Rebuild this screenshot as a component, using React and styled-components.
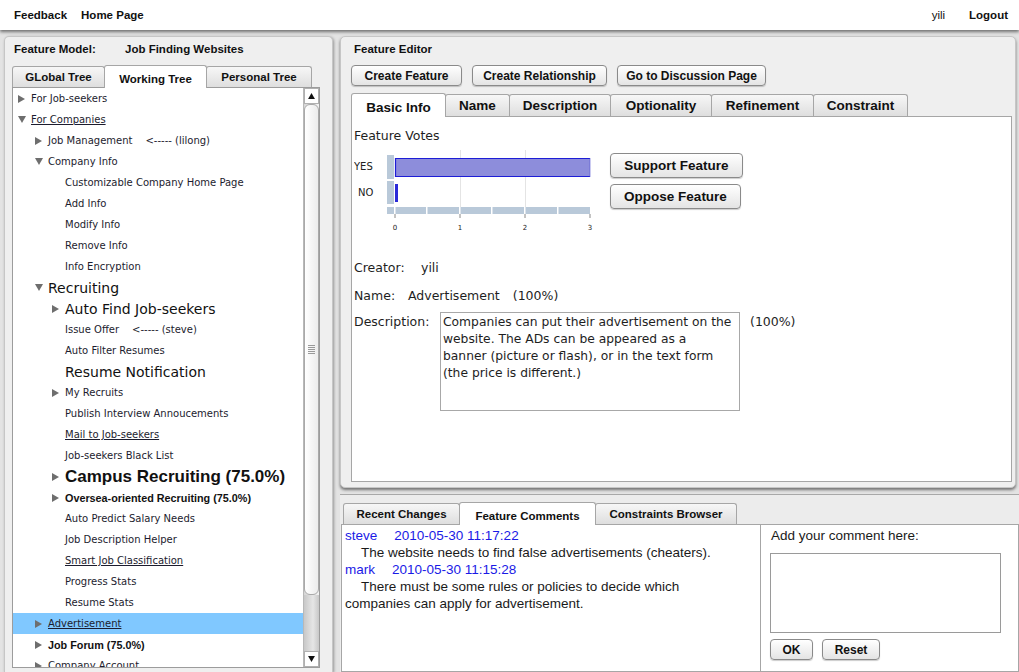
import React from "react";
import styled, { createGlobalStyle, css } from "styled-components";

const GlobalStyle = createGlobalStyle`
  html, body { margin: 0; padding: 0; }
  body {
    width: 1019px;
    height: 672px;
    overflow: hidden;
    background: #e3e3e3;
    font-family: "Liberation Sans", Arial, sans-serif;
    color: #1a1a1a;
  }
  #root { height: 672px; }
`;

const Page = styled.div`
  display: flex;
  flex-direction: column;
  height: 672px;
  overflow: hidden;
`;

const TopBar = styled.header`
  height: 30px;
  flex: none;
  display: flex;
  align-items: center;
  justify-content: space-between;
  padding: 0 11px 0 14px;
  background: #fff;
  box-shadow: 0 2px 3px rgba(0, 0, 0, 0.5);
  position: relative;
  z-index: 2;
`;

const NavGroup = styled.nav`
  display: flex;
  align-items: center;
  gap: ${(p) => p.$gap || 14}px;
`;

const NavLink = styled.span`
  font-size: 11.5px;
  font-weight: ${(p) => (p.$plain ? 400 : 700)};
  color: #111;
`;

const Main = styled.div`
  flex: 1;
  min-height: 0;
  display: flex;
  gap: 7px;
  padding: 6px 0 0 4px;
`;

const LeftPanel = styled.section`
  width: 329px;
  box-sizing: border-box;
  display: flex;
  flex-direction: column;
  background: #efefef;
  border: 1px solid #c6c6c6;
  border-bottom: none;
  border-radius: 5px 5px 0 0;
  padding: 0 12px 4px 7px;
  box-shadow: 1px 1px 3px rgba(0, 0, 0, 0.35);
`;

const PanelHeader = styled.div`
  height: 28px;
  flex: none;
  display: flex;
  align-items: flex-start;
  padding: 5px 0 0 ${(p) => p.$indent || 2}px;
  box-sizing: border-box;
  font-size: 11.5px;
  font-weight: 700;
  line-height: 14px;
  color: #111;
`;

const HeaderLabel = styled.span`
  width: ${(p) => p.$w || "auto"};
  flex: none;
`;

const TabRow = styled.div`
  display: flex;
  align-items: flex-end;
  flex: none;
  height: ${(p) => p.$h}px;
  margin-left: ${(p) => p.$ml || 0}px;
  position: relative;
  z-index: 1;
`;

const Tab = styled.div`
  box-sizing: border-box;
  width: ${(p) => p.$w}px;
  display: flex;
  align-items: center;
  justify-content: center;
  font-weight: 700;
  font-size: ${(p) => p.$fs}px;
  color: #111;
  border: 1px solid #a6a6a6;
  border-radius: 3px 3px 0 0;
  margin-left: ${(p) => (p.$first ? 0 : -1)}px;
  ${(p) =>
    p.$active
      ? css`
          height: ${p.$h + 2}px;
          margin-bottom: -1px;
          background: #fff;
          border-bottom: none;
          padding-top: 3px;
          position: relative;
          z-index: 1;
        `
      : css`
          height: ${p.$h}px;
          background: linear-gradient(#f7f7f7, #dedede);
          border-bottom: none;
        `}
`;

const TreeBox = styled.div`
  flex: 1;
  min-height: 0;
  display: flex;
  border: 1px solid #9c9c9c;
  background: #fff;
`;

const TreeList = styled.ul`
  list-style: none;
  margin: 0;
  padding: 0;
  flex: 1;
  overflow: hidden;
`;

const rowFont = {
  small: css`
    font-family: "DejaVu Sans", Verdana, sans-serif;
    font-size: 10px;
    color: #1c1c2e;
  `,
  big: css`
    font-family: "DejaVu Sans", Verdana, sans-serif;
    font-size: 14px;
    color: #111;
  `,
  bigbold: css`
    font-family: "Liberation Sans", Arial, sans-serif;
    font-size: 17px;
    font-weight: 700;
    color: #111;
  `,
  bold: css`
    font-family: "Liberation Sans", Arial, sans-serif;
    font-size: 10.8px;
    font-weight: 700;
    color: #111;
  `,
};

const TreeRow = styled.li`
  height: 21px;
  display: flex;
  align-items: center;
  padding-left: ${(p) => 5 + p.$level * 17}px;
  white-space: nowrap;
  background: ${(p) => (p.$selected ? "#80c8ff" : "transparent")};
  ${(p) => rowFont[p.$variant]}
`;

const Toggle = styled.span`
  width: 13px;
  flex: none;
  display: flex;
  align-items: center;
`;

const RowText = styled.span`
  text-decoration: ${(p) => (p.$underline ? "underline" : "none")};
`;

const Owner = styled.span`
  margin-left: 13px;
`;

const ScrollBar = styled.div`
  width: 15px;
  flex: none;
  display: flex;
  flex-direction: column;
  border-left: 1px solid #b8b8b8;
  background: linear-gradient(to right, #d6d6d6, #f2f2f2);
`;

const ScrollButton = styled.div`
  height: 16px;
  flex: none;
  display: flex;
  align-items: center;
  justify-content: center;
  background: #fff;
  border: 1px solid #b0b0b0;
  box-sizing: border-box;
`;

const Thumb = styled.div`
  height: 491px;
  flex: none;
  box-sizing: border-box;
  border: 1px solid #a9a9a9;
  border-radius: 6px;
  background: linear-gradient(to right, #ffffff, #ececec);
  display: flex;
  align-items: center;
  justify-content: center;
`;

const Grip = styled.div`
  width: 7px;
  height: 9px;
  background: repeating-linear-gradient(#999 0 1px, transparent 1px 2px);
`;

const Track = styled.div`
  flex: 1;
  background: linear-gradient(to right, #c8c8c8, #e6e6e6 60%, #c8c8c8);
`;

const RightColumn = styled.div`
  flex: 1;
  min-width: 0;
  display: flex;
  flex-direction: column;
  gap: 6px;
`;

const EditorPanel = styled.section`
  height: 452px;
  flex: none;
  box-sizing: border-box;
  margin-right: 3px;
  display: flex;
  flex-direction: column;
  background: #efefef;
  border: 1px solid #c6c6c6;
  border-radius: 5px;
  padding: 0 3px 5px 10px;
  box-shadow: 0 2px 3px rgba(0, 0, 0, 0.5);
`;

const ButtonRow = styled.div`
  display: flex;
  gap: 10px;
  flex: none;
  margin-bottom: 7px;
`;

const Button = styled.button`
  box-sizing: border-box;
  width: ${(p) => p.$w}px;
  height: ${(p) => p.$h || 21}px;
  padding: 0;
  font-family: "Liberation Sans", Arial, sans-serif;
  font-weight: 700;
  font-size: ${(p) => p.$fs || 12}px;
  color: #111;
  background: linear-gradient(#ffffff, #e4e4e4);
  border: 1px solid #8a8a8a;
  border-radius: 4px;
  box-shadow: 0 1px 1px rgba(0, 0, 0, 0.2);
`;

const TabContent = styled.div`
  flex: 1;
  background: #fff;
  border: 1px solid #a6a6a6;
  padding: 0 0 0 2px;
  display: flex;
  flex-direction: column;
  font-family: "DejaVu Sans", Verdana, sans-serif;
  font-size: 12.5px;
  color: #1e1e1e;
`;

const SectionTitle = styled.div`
  margin-top: 10px;
  line-height: 17px;
`;

const VotesRow = styled.div`
  display: flex;
  align-items: flex-start;
  margin-top: 4px;
`;

const VoteButtons = styled.div`
  display: flex;
  flex-direction: column;
  gap: 6px;
  margin-left: 6px;
  padding-top: 5px;
`;

const Field = styled.div`
  display: flex;
  align-items: flex-start;
  line-height: 17px;
  margin-top: ${(p) => p.$mt}px;
`;

const FieldLabel = styled.span`
  width: ${(p) => p.$w}px;
  flex: none;
  padding-top: ${(p) => p.$pt || 0}px;
`;

const Pct = styled.span`
  margin-left: ${(p) => p.$ml}px;
  padding-top: ${(p) => p.$pt || 0}px;
`;

const DescBox = styled.div`
  width: 300px;
  height: 99px;
  box-sizing: border-box;
  border: 1px solid #a8a8a8;
  padding: 1px 2px;
  line-height: 17px;
  font-size: 12.3px;
  white-space: nowrap;
  overflow: hidden;
`;

const DescLine = styled.span`
  display: block;
`;

const BottomPanel = styled.section`
  flex: 1;
  min-height: 0;
  display: flex;
  flex-direction: column;
  background: #ececec;
  border-top: 1px solid #a8a8a8;
  padding: 7px 0 0 1px;
`;

const BottomBody = styled.div`
  flex: 1;
  display: flex;
  font-family: "Liberation Sans", Arial, sans-serif;
  font-size: 13.5px;
  line-height: 17px;
  color: #1a1a1a;
`;

const CommentList = styled.div`
  width: 420px;
  box-sizing: border-box;
  background: #fff;
  border: 1px solid #a6a6a6;
  padding: 2px 40px 0 3px;
`;

const CommentHead = styled.div`
  color: #1a1ae6;
`;

const CommentTime = styled.span`
  margin-left: 17px;
`;

const CommentText = styled.p`
  margin: 0;
  text-indent: 16px;
`;

const CommentForm = styled.div`
  flex: 1;
  background: #fff;
  border: 1px solid #a6a6a6;
  border-left: none;
  padding: 1px 9px 0 10px;
  display: flex;
  flex-direction: column;
`;

const FormLabel = styled.div`
  margin-top: 1px;
`;

const TextArea = styled.div`
  width: 231px;
  height: 80px;
  box-sizing: border-box;
  border: 1px solid #9a9a9a;
  margin-top: 9px;
  margin-left: -1px;
`;

const FormButtons = styled.div`
  display: flex;
  gap: 9px;
  margin-top: 6px;
  margin-left: -1px;
`;

const Tri = ({ dir, color = "#777", size = 8 }) =>
  dir === "down" ? (
    <svg width={size} height={size - 1} viewBox="0 0 8 7">
      <polygon points="0,0 8,0 4,7" fill={color} />
    </svg>
  ) : dir === "up" ? (
    <svg width={size} height={size - 1} viewBox="0 0 8 7">
      <polygon points="0,7 8,7 4,0" fill={color} />
    </svg>
  ) : (
    <svg width={size - 1} height={size} viewBox="0 0 7 8">
      <polygon points="0,0 7,4 0,8" fill={color} />
    </svg>
  );

const tree = [
  { l: 0, a: "right", t: "For Job-seekers" },
  { l: 0, a: "down", t: "For Companies", u: true },
  { l: 1, a: "right", t: "Job Management", o: "<----- (lilong)" },
  { l: 1, a: "down", t: "Company Info" },
  { l: 2, t: "Customizable Company Home Page" },
  { l: 2, t: "Add Info" },
  { l: 2, t: "Modify Info" },
  { l: 2, t: "Remove Info" },
  { l: 2, t: "Info Encryption" },
  { l: 1, a: "down", t: "Recruiting", v: "big" },
  { l: 2, a: "right", t: "Auto Find Job-seekers", v: "big" },
  { l: 2, t: "Issue Offer", o: "<----- (steve)" },
  { l: 2, t: "Auto Filter Resumes" },
  { l: 2, t: "Resume Notification", v: "big" },
  { l: 2, a: "right", t: "My Recruits" },
  { l: 2, t: "Publish Interview Annoucements" },
  { l: 2, t: "Mail to Job-seekers", u: true },
  { l: 2, t: "Job-seekers Black List" },
  { l: 2, a: "right", t: "Campus Recruiting (75.0%)", v: "bigbold" },
  { l: 2, a: "right", t: "Oversea-oriented Recruiting (75.0%)", v: "bold" },
  { l: 2, t: "Auto Predict Salary Needs" },
  { l: 2, t: "Job Description Helper" },
  { l: 2, t: "Smart Job Classification", u: true },
  { l: 2, t: "Progress Stats" },
  { l: 2, t: "Resume Stats" },
  { l: 1, a: "right", t: "Advertisement", u: true, s: true },
  { l: 1, a: "right", t: "Job Forum (75.0%)", v: "bold" },
  { l: 1, a: "right", t: "Company Account" },
];

const descLines = [
  "Companies can put their advertisement on the",
  "website. The ADs can be appeared as a",
  "banner (picture or flash), or in the text form",
  "(the price is different.)",
];

const VotesChart = () => (
  <svg width="250" height="85" viewBox="0 0 250 85">
    <g fontFamily="DejaVu Sans, Verdana, sans-serif" fill="#222">
      <text x="0" y="22" fontSize="10">YES</text>
      <text x="4" y="48" fontSize="10">NO</text>
    </g>
    <line x1="106.5" y1="2" x2="106.5" y2="59" stroke="#e4e4e4" />
    <line x1="171.5" y1="2" x2="171.5" y2="59" stroke="#e4e4e4" />
    <rect x="33" y="7" width="7" height="24" fill="#b9c9d9" />
    <rect x="33" y="33" width="7" height="23" fill="#b9c9d9" />
    <rect x="41" y="10" width="195" height="19" fill="#8d8ddb" />
    <path d="M236 10.5 H41.5 V28.5 H236" fill="none" stroke="#1d1dd6" strokeWidth="1.2" />
    <line x1="236" y1="10" x2="236" y2="29" stroke="#5050d0" strokeWidth="0.6" />
    <rect x="41" y="36" width="3" height="18" fill="#2a2ad8" />
    <rect x="33" y="59" width="203" height="7" fill="#b9c9d9" />
    {[41, 73, 106, 138, 171, 204].map((x) => (
      <rect key={x} x={x - 1} y="59" width="1.5" height="7" fill="#fff" />
    ))}
    {[41, 106, 171, 236].map((x) => (
      <line key={x} x1={x} y1="66" x2={x} y2="70" stroke="#888" />
    ))}
    <g fontFamily="DejaVu Sans, Verdana, sans-serif" fontSize="7" fill="#222" textAnchor="middle">
      <text x="41" y="82">0</text>
      <text x="106" y="82">1</text>
      <text x="171" y="82">2</text>
      <text x="236" y="82">3</text>
    </g>
  </svg>
);

export default function App() {
  return (
    <Page>
      <GlobalStyle />
      <TopBar>
        <NavGroup $gap={14}>
          <NavLink>Feedback</NavLink>
          <NavLink>Home Page</NavLink>
        </NavGroup>
        <NavGroup $gap={24}>
          <NavLink $plain>yili</NavLink>
          <NavLink>Logout</NavLink>
        </NavGroup>
      </TopBar>
      <Main>
        <LeftPanel>
          <PanelHeader>
            <HeaderLabel $w="111px">Feature Model:</HeaderLabel>
            <HeaderLabel>Job Finding Websites</HeaderLabel>
          </PanelHeader>
          <TabRow $h={22}>
            <Tab $w={93} $h={21} $fs={11.5} $first>GLobal Tree</Tab>
            <Tab $w={103} $h={21} $fs={11.5} $active>Working Tree</Tab>
            <Tab $w={106} $h={21} $fs={11.5}>Personal Tree</Tab>
          </TabRow>
          <TreeBox>
            <TreeList>
              {tree.map((r, i) => (
                <TreeRow key={i} $level={r.l} $variant={r.v || "small"} $selected={r.s}>
                  <Toggle>{r.a && <Tri dir={r.a} color="#6e6e6e" />}</Toggle>
                  <RowText $underline={r.u}>{r.t}</RowText>
                  {r.o && <Owner>{r.o}</Owner>}
                </TreeRow>
              ))}
            </TreeList>
            <ScrollBar>
              <ScrollButton>
                <Tri dir="up" color="#111" size={7} />
              </ScrollButton>
              <Thumb>
                <Grip />
              </Thumb>
              <Track />
              <ScrollButton>
                <Tri dir="down" color="#111" size={7} />
              </ScrollButton>
            </ScrollBar>
          </TreeBox>
        </LeftPanel>
        <RightColumn>
          <EditorPanel>
            <PanelHeader $indent={3}>Feature Editor</PanelHeader>
            <ButtonRow>
              <Button $w={111}>Create Feature</Button>
              <Button $w={135}>Create Relationship</Button>
              <Button $w={149}>Go to Discussion Page</Button>
            </ButtonRow>
            <TabRow $h={23}>
              <Tab $w={95} $h={22} $fs={13.5} $active $first>Basic Info</Tab>
              <Tab $w={65} $h={22} $fs={13.5}>Name</Tab>
              <Tab $w={102} $h={22} $fs={13.5}>Description</Tab>
              <Tab $w={102} $h={22} $fs={13.5}>Optionality</Tab>
              <Tab $w={103} $h={22} $fs={13.5}>Refinement</Tab>
              <Tab $w={95} $h={22} $fs={13.5}>Constraint</Tab>
            </TabRow>
            <TabContent>
              <SectionTitle>Feature Votes</SectionTitle>
              <VotesRow>
                <VotesChart />
                <VoteButtons>
                  <Button $w={133} $h={25} $fs={13.5}>Support Feature</Button>
                  <Button $w={131} $h={25} $fs={13.5}>Oppose Feature</Button>
                </VoteButtons>
              </VotesRow>
              <Field $mt={26}>
                <FieldLabel $w={67}>Creator:</FieldLabel>
                <span>yili</span>
              </Field>
              <Field $mt={11}>
                <FieldLabel $w={54}>Name:</FieldLabel>
                <span>Advertisement</span>
                <Pct $ml={13}>(100%)</Pct>
              </Field>
              <Field $mt={8}>
                <FieldLabel $w={86} $pt={1}>Description:</FieldLabel>
                <DescBox>
                  {descLines.map((line) => (
                    <DescLine key={line}>{line}</DescLine>
                  ))}
                </DescBox>
                <Pct $ml={10} $pt={1}>(100%)</Pct>
              </Field>
            </TabContent>
          </EditorPanel>
          <BottomPanel>
            <TabRow $h={22} $ml={2}>
              <Tab $w={117} $h={21} $fs={11.5} $first>Recent Changes</Tab>
              <Tab $w={137} $h={21} $fs={11.5} $active>Feature Comments</Tab>
              <Tab $w={142} $h={21} $fs={11.5}>Constraints Browser</Tab>
            </TabRow>
            <BottomBody>
              <CommentList>
                <CommentHead>
                  steve<CommentTime>2010-05-30 11:17:22</CommentTime>
                </CommentHead>
                <CommentText>The website needs to find false advertisements (cheaters).</CommentText>
                <CommentHead>
                  mark<CommentTime>2010-05-30 11:15:28</CommentTime>
                </CommentHead>
                <CommentText>There must be some rules or policies to decide which companies can apply for advertisement.</CommentText>
              </CommentList>
              <CommentForm>
                <FormLabel>Add your comment here:</FormLabel>
                <TextArea />
                <FormButtons>
                  <Button $w={43} $h={21} $fs={12}>OK</Button>
                  <Button $w={58} $h={21} $fs={12}>Reset</Button>
                </FormButtons>
              </CommentForm>
            </BottomBody>
          </BottomPanel>
        </RightColumn>
      </Main>
    </Page>
  );
}
